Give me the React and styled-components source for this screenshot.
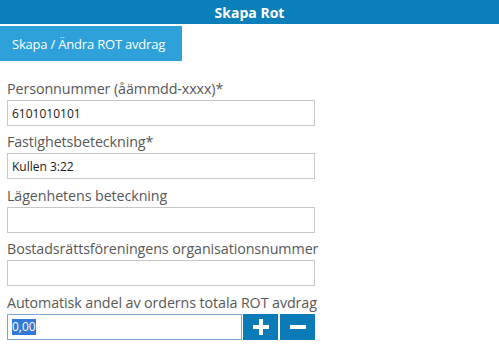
import React from "react";
import styled, { createGlobalStyle } from "styled-components";

const Global = createGlobalStyle`
  html, body { margin: 0; padding: 0; background: #fff; }
  body { font-family: "Open Sans", "Noto Sans", sans-serif; }
  * { box-sizing: border-box; }
`;

const Page = styled.div`
  width: 499px;
  height: 346px;
  overflow: hidden;
  background: #fff;
`;

const Header = styled.div`
  height: 24px;
  background: #0a7fba;
  color: #fff;
  font-weight: 700;
  font-size: 14px;
  display: flex;
  align-items: center;
  justify-content: center;
`;

const TabBar = styled.div`
  display: flex;
  margin-top: 2px;
`;

const Tab = styled.div`
  width: 182px;
  height: 35px;
  background: #2ea1db;
  color: #fff;
  font-size: 13px;
  display: flex;
  align-items: center;
  padding-left: 12px;
  letter-spacing: -0.2px;
`;

const Form = styled.div`
  padding: 18px 7px 0;
  display: flex;
  flex-direction: column;
  gap: 6.4px;
`;

const Field = styled.div`
  display: flex;
  flex-direction: column;
`;

const Label = styled.label`
  font-size: 14.3px;
  line-height: 20px;
  color: #585858;
  margin-bottom: 1px;
  letter-spacing: -0.1px;
  white-space: nowrap;
`;

const Input = styled.div`
  width: ${(p) => p.$w || 308}px;
  height: 26px;
  border: 1px solid ${(p) => (p.$focus ? "#7ea3d6" : "#c8c8c8")};
  background: #fff;
  font-size: 12px;
  color: #1a1a1a;
  display: flex;
  align-items: center;
  padding-left: 4px;
`;

const Selected = styled.span`
  background: #3278d6;
  color: #fff;
  line-height: 16px;
`;

const Row = styled.div`
  display: flex;
  gap: 1px;
`;

const Btn = styled.button`
  width: 35px;
  height: 26px;
  border: none;
  background: #0b7bb7;
  margin-left: ${(p) => p.$ml || 0}px;
  padding: 0;
  display: flex;
  align-items: center;
  justify-content: center;
`;

const Plus = () => (
  <svg width="16" height="16" viewBox="0 0 16 16">
    <rect x="6" y="0" width="4" height="16" fill="#fff" />
    <rect x="0" y="6" width="16" height="4" fill="#fff" />
  </svg>
);
const Minus = () => (
  <svg width="16" height="16" viewBox="0 0 16 16">
    <rect x="0" y="6" width="16" height="4" fill="#fff" />
  </svg>
);

export default function App() {
  return (
    <Page>
      <Global />
      <Header>Skapa Rot</Header>
      <TabBar>
        <Tab>Skapa / Ändra ROT avdrag</Tab>
      </TabBar>
      <Form>
        <Field>
          <Label>Personnummer (åämmdd-xxxx)*</Label>
          <Input>6101010101</Input>
        </Field>
        <Field>
          <Label>Fastighetsbeteckning*</Label>
          <Input>Kullen 3:22</Input>
        </Field>
        <Field>
          <Label>Lägenhetens beteckning</Label>
          <Input />
        </Field>
        <Field>
          <Label>Bostadsrättsföreningens organisationsnummer</Label>
          <Input />
        </Field>
        <Field>
          <Label>Automatisk andel av orderns totala ROT avdrag</Label>
          <Row>
            <Input $w={235} $focus>
              <Selected>0,00</Selected>
            </Input>
            <Btn aria-label="Öka">
              <Plus />
            </Btn>
            <Btn aria-label="Minska" $ml={1}>
              <Minus />
            </Btn>
          </Row>
        </Field>
      </Form>
    </Page>
  );
}
